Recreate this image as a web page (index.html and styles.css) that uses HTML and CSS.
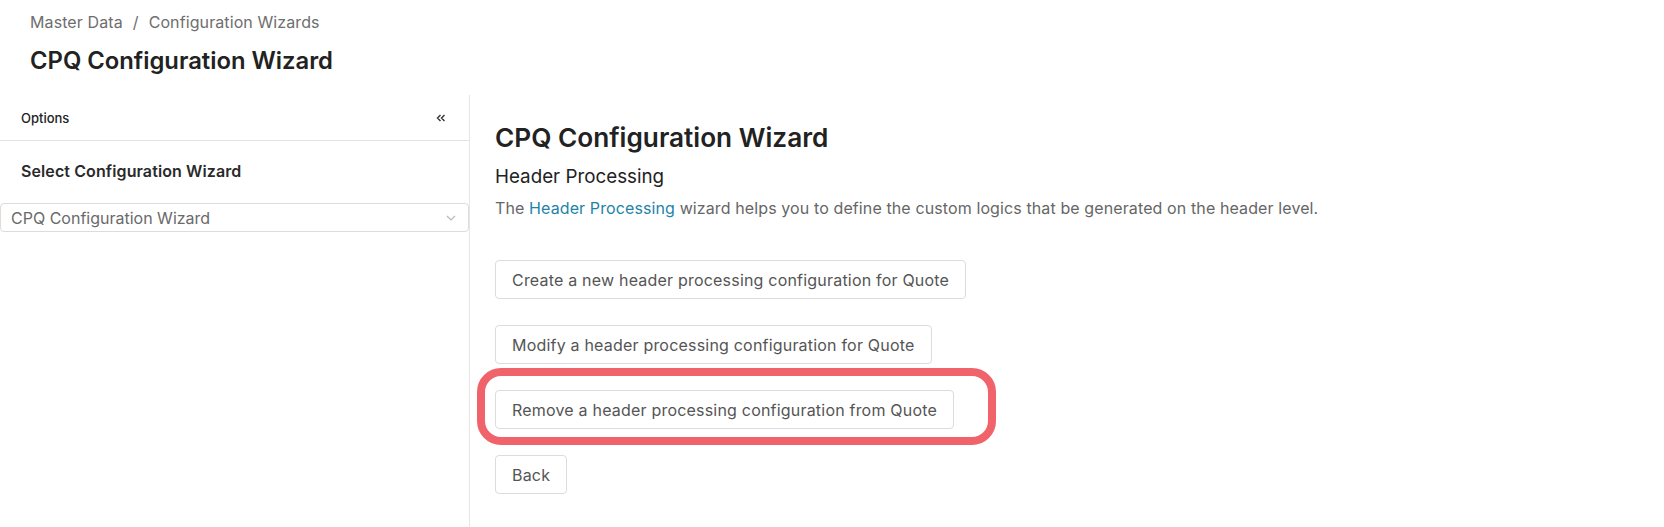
FILE: index.html
```html
<!DOCTYPE html>
<html>
<head>
<meta charset="utf-8">
<link rel="stylesheet" href="styles.css">
</head>
<body>
<div class="page">
  <div class="top">
    <div class="crumbs"><span>Master Data</span><span class="sep">/</span><span>Configuration Wizards</span></div>
    <h1 class="title">CPQ Configuration Wizard</h1>
  </div>
  <div class="layout">
    <aside class="sidebar">
      <div class="side-head">
        <span>Options</span>
        <svg class="collapse" width="10" height="8" viewBox="0 0 10 8"><path d="M4.5 1 L1.5 4 L4.5 7 M8.5 1 L5.5 4 L8.5 7" fill="none" stroke="#333" stroke-width="1.4"/></svg>
      </div>
      <div class="side-label">Select Configuration Wizard</div>
      <div class="select">
        <span>CPQ Configuration Wizard</span>
        <svg width="10" height="6" viewBox="0 0 10 6"><path d="M1 1 L5 5 L9 1" fill="none" stroke="#b8b8b8" stroke-width="1.2"/></svg>
      </div>
    </aside>
    <main class="main">
      <h2 class="main-title">CPQ Configuration Wizard</h2>
      <h3 class="sub">Header Processing</h3>
      <p class="desc">The <a class="link">Header Processing</a> wizard helps you to define the custom logics that be generated on the header level.</p>
      <div class="actions">
        <button class="btn">Create a new header processing configuration for Quote</button>
        <button class="btn">Modify a header processing configuration for Quote</button>
        <button class="btn highlighted">Remove a header processing configuration from Quote</button>
        <button class="btn">Back</button>
      </div>
    </main>
  </div>
</div>
</body>
</html>
```
FILE: styles.css
```css
* { box-sizing: border-box; }
html, body { margin: 0; background: #fff; }
body { font-family: Inter, "Noto Sans", sans-serif; color: #222; }
.top { padding: 11px 30px 0; height: 95px; }
.crumbs { font-size: 16px; color: #6e6e6e; line-height: 22px; display: flex; letter-spacing: 0.1px; }
.crumbs .sep { margin: 0 10px; }
.title { margin: 12px 0 0; font-size: 23.8px; font-weight: 600; line-height: 32px; color: #222; }
.layout { display: flex; height: 432px; }
.sidebar { width: 470px; border-right: 1px solid #e6e6e6; flex: none; }
.side-head { height: 46px; border-bottom: 1px solid #e3e3e3; display: flex; align-items: center; justify-content: space-between; padding: 0 23px 0 21px; font-size: 13px; font-weight: 500; color: #222; }
.side-label { font-size: 16px; font-weight: 600; color: #2a2a2a; padding: 0 21px; margin-top: 19px; line-height: 22px; letter-spacing: 0.1px; }
.select { margin-top: 21px; width: 469px; height: 29px; border: 1px solid #dcdcdc; border-radius: 4px; display: flex; align-items: center; justify-content: space-between; padding: 0 12px 0 10px; font-size: 16px; color: #6a6a6a; }
.main { padding: 27px 24px 0 25px; flex: 1; }
.main-title { margin: 0; font-size: 26.2px; font-weight: 600; line-height: 32px; color: #222; }
.sub { margin: 10px 0 0; font-size: 18.8px; font-weight: 400; line-height: 26px; color: #222; }
.desc { margin: 6px 0 0; font-size: 16px; color: #666; line-height: 24px; letter-spacing: 0.11px; }
.link { color: #1e83a8; text-decoration: none; }
.actions { display: flex; flex-direction: column; align-items: flex-start; gap: 26px; margin-top: 40px; }
.btn { font-family: inherit; font-size: 16px; color: #555; background: #fff; border: 1px solid #dcdce0; border-radius: 4px; height: 39px; padding: 0 16px; letter-spacing: 0.2px; cursor: pointer; }
.highlighted { position: relative; }
.highlighted::after { content: ""; position: absolute; left: -19px; right: -43px; top: -23px; bottom: -17px; border: 8px solid #f0636a; border-radius: 24px; pointer-events: none; }
```
